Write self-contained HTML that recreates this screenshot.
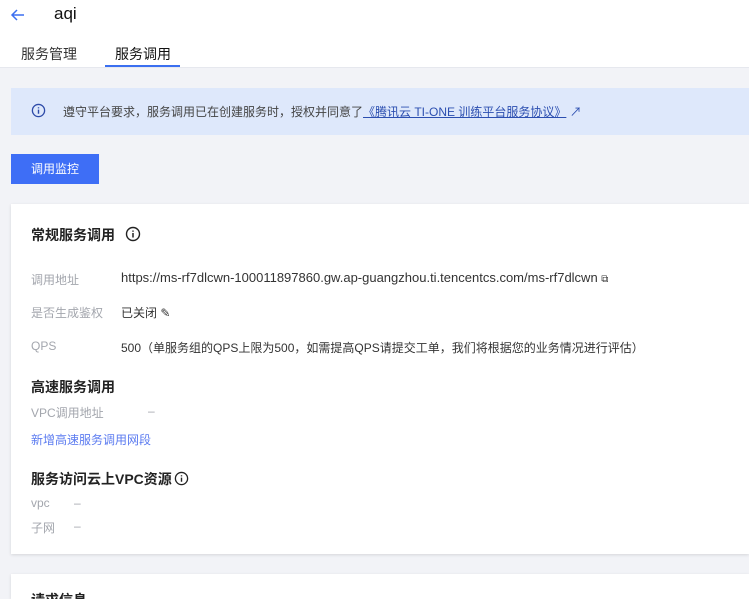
<!DOCTYPE html><html style="overflow:hidden"><head><meta charset="utf-8"><style>
html,body{overflow:hidden}
body{margin:0;width:749px;height:599px;overflow:hidden;background:#f2f3f7;font-family:"Liberation Sans","Noto Sans CJK SC",sans-serif;position:relative;color:#000}
.a{position:absolute;white-space:nowrap}
.top{position:absolute;left:0;top:0;width:749px;height:67px;background:#fff;border-bottom:1px solid #e6e8ee}
.card{position:absolute;left:11px;top:204px;width:738px;height:350px;background:#fff;box-shadow:0 1px 3px rgba(0,0,0,.12)}
.lbl{color:#a3a6ad;font-size:12px}
.val{color:#333;font-size:12px}
.h{font-size:14px;font-weight:bold;color:#222}
</style></head><body>
<div class="top"></div>
<svg class="a" style="left:10px;top:8px" width="16" height="14" viewBox="0 0 16 14"><path d="M14 7H2M7 2L2 7l5 5" fill="none" stroke="#3b6ff0" stroke-width="1.5"/></svg>
<div class="a" style="left:54px;top:4px;font-size:17px;color:#111">aqi</div>
<div class="a" style="left:21px;top:44px;font-size:14px;color:#333">服务管理</div>
<div class="a" style="left:115px;top:44px;font-size:14px;color:#111">服务调用</div>
<div class="a" style="left:105px;top:65px;width:75px;height:2px;background:#3b6ff0"></div>
<div class="a" style="left:11px;top:88px;width:738px;height:47px;background:#dee8fb"></div>
<svg class="a" style="left:31px;top:103px" width="15" height="15" viewBox="0 0 16 16"><circle cx="8" cy="8" r="6.5" fill="none" stroke="#2d4aa8" stroke-width="1.4"/><path d="M8 7v4.5M8 4.5v1.2" stroke="#2d4aa8" stroke-width="1.5"/></svg>
<div class="a" style="left:63px;top:103px;font-size:12px;color:#444">遵守平台要求，服务调用已在创建服务时，授权并同意了<span style="color:#2b4eb0;text-decoration:underline">《腾讯云 TI-ONE 训练平台服务协议》</span> <span style="color:#2b4eb0">↗</span></div>
<div class="a" style="left:11px;top:154px;width:88px;height:30px;background:#3e6ef6;color:#fff;font-size:12px;line-height:30px;text-align:center">调用监控</div>
<div class="card"></div>
<div class="a h" style="left:31px;top:225px">常规服务调用</div>
<svg class="a" style="left:125px;top:226px" width="16" height="16" viewBox="0 0 16 16"><circle cx="8" cy="8" r="6.5" fill="none" stroke="#222" stroke-width="1.4"/><path d="M8 7v4.5M8 4.5v1.2" stroke="#222" stroke-width="1.5"/></svg>
<div class="a lbl" style="left:31px;top:271px">调用地址</div>
<div class="a val" style="left:121px;top:270px;font-size:13px">https://ms-rf7dlcwn-100011897860.gw.ap-guangzhou.ti.tencentcs.com/ms-rf7dlcwn <span style="font-size:10px">⧉</span></div>
<div class="a lbl" style="left:31px;top:304px">是否生成鉴权</div>
<div class="a val" style="left:121px;top:304px">已关闭 ✎</div>
<div class="a lbl" style="left:31px;top:339px">QPS</div>
<div class="a val" style="left:121px;top:339px">500（单服务组的QPS上限为500，如需提高QPS请提交工单，我们将根据您的业务情况进行评估）</div>
<div class="a h" style="left:31px;top:377px">高速服务调用</div>
<div class="a lbl" style="left:31px;top:404px">VPC调用地址</div>
<div class="a lbl" style="left:148px;top:404px">–</div>
<div class="a" style="left:31px;top:431px;font-size:12px;color:#5b7bf0">新增高速服务调用网段</div>
<div class="a h" style="left:31px;top:469px">服务访问云上VPC资源</div>
<svg class="a" style="left:174px;top:471px" width="15" height="15" viewBox="0 0 16 16"><circle cx="8" cy="8" r="6.5" fill="none" stroke="#222" stroke-width="1.4"/><path d="M8 7v4.5M8 4.5v1.2" stroke="#222" stroke-width="1.5"/></svg>
<div class="a lbl" style="left:31px;top:496px">vpc</div><div class="a lbl" style="left:74px;top:496px">–</div>
<div class="a lbl" style="left:31px;top:519px">子网</div><div class="a lbl" style="left:74px;top:519px">–</div>
<div class="a" style="left:11px;top:574px;width:738px;height:25px;background:#fff;box-shadow:0 1px 3px rgba(0,0,0,.12)"></div>
<div class="a h" style="left:31px;top:590px;height:9px;overflow:hidden">请求信息</div>
</body></html>
